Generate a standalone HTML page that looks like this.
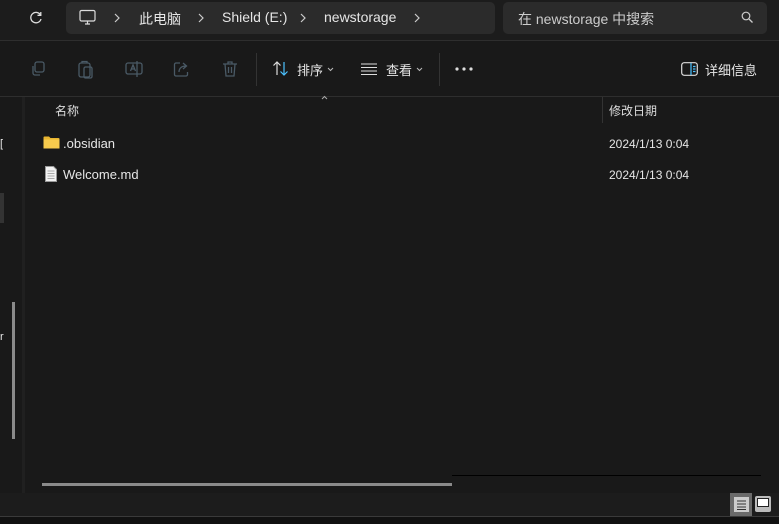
<!DOCTYPE html>
<html><head><meta charset="utf-8"><style>
*{margin:0;padding:0;box-sizing:border-box}
body{width:779px;height:524px;background:#191919;font-family:"Liberation Sans","Noto Sans CJK SC",sans-serif;color:#e6e6e6;position:relative;overflow:hidden;font-size:13px}
.a{position:absolute}
.ic{stroke:#4a5a66;fill:none;stroke-width:1.3}
</style></head><body>
<div class="a" style="left:0;top:0;width:779px;height:41px;background:#1c1c1c;border-bottom:1px solid #2e2e2e"></div>
<svg class="a" style="left:28px;top:10px" width="16" height="16" viewBox="0 0 16 16"><path d="M12.5 5 A5.2 5.2 0 1 0 13 9" stroke="#ddd" stroke-width="1.3" fill="none"/><path d="M12.8 2v3.3h-3.3" stroke="#ddd" stroke-width="1.3" fill="none"/></svg>
<div class="a" style="left:66px;top:2px;width:429px;height:32px;background:#2b2b2b;border-radius:5px"></div>
<svg class="a" style="left:79px;top:9px" width="17" height="17" viewBox="0 0 17 17"><rect x="1" y="1.5" width="15" height="10.5" rx="1.5" stroke="#ddd" stroke-width="1.2" fill="none"/><path d="M6 15h5M8.5 12v3" stroke="#ddd" stroke-width="1.2"/></svg>
<svg class="a" style="left:114px;top:13px" width="6" height="10"><path d="M1 1l4 4-4 4" stroke="#ccc" stroke-width="1.2" fill="none"/></svg>
<div class="a" style="left:139px;top:9px;font-size:14px">此电脑</div>
<svg class="a" style="left:198px;top:13px" width="6" height="10"><path d="M1 1l4 4-4 4" stroke="#ccc" stroke-width="1.2" fill="none"/></svg>
<div class="a" style="left:222px;top:9px;font-size:14px">Shield (E:)</div>
<svg class="a" style="left:300px;top:13px" width="6" height="10"><path d="M1 1l4 4-4 4" stroke="#ccc" stroke-width="1.2" fill="none"/></svg>
<div class="a" style="left:324px;top:9px;font-size:14px">newstorage</div>
<svg class="a" style="left:414px;top:13px" width="6" height="10"><path d="M1 1l4 4-4 4" stroke="#ccc" stroke-width="1.2" fill="none"/></svg>
<div class="a" style="left:503px;top:2px;width:264px;height:32px;background:#2b2b2b;border-radius:5px"></div>
<div class="a" style="left:518px;top:9px;font-size:14px;color:#ccc">在 newstorage 中搜索</div>
<svg class="a" style="left:741px;top:11px" width="13" height="13" viewBox="0 0 13 13"><circle cx="5" cy="5" r="3.8" stroke="#ccc" stroke-width="1.2" fill="none"/><path d="M8 8l3.5 3.5" stroke="#ccc" stroke-width="1.3"/></svg>
<!-- toolbar -->
<svg class="a" style="left:30px;top:60px" width="18" height="18" viewBox="0 0 18 18"><rect x="5" y="2" width="9" height="10" rx="2" class="ic" stroke="#3a5a70"/><path d="M3 6v7a2 2 0 0 0 2 2h5" class="ic"/></svg>
<svg class="a" style="left:78px;top:60px" width="18" height="20" viewBox="0 0 18 20"><rect x="1" y="3" width="11" height="14" rx="2" class="ic"/><rect x="6" y="7" width="8" height="11" rx="1.5" class="ic" stroke="#3a5a70"/><path d="M4 3V1.5h5V3" class="ic"/></svg>
<svg class="a" style="left:125px;top:60px" width="18" height="18" viewBox="0 0 18 18"><rect x="1" y="3" width="16" height="11" rx="2" class="ic"/><path d="M5.5 11l2.5-6 2.5 6M6.5 9h3" class="ic" stroke="#3a5a70"/><path d="M12 1v16" class="ic" stroke="#3a5a70"/></svg>
<svg class="a" style="left:173px;top:60px" width="18" height="18" viewBox="0 0 18 18"><path d="M7 3H3a1.5 1.5 0 0 0-1.5 1.5v10A1.5 1.5 0 0 0 3 16h10a1.5 1.5 0 0 0 1.5-1.5V12" class="ic"/><path d="M6 12c0-4 3-6 7-6M10 3l3.5 3L10 9" class="ic" stroke="#3a5a70"/></svg>
<svg class="a" style="left:221px;top:60px" width="18" height="18" viewBox="0 0 18 18"><path d="M2 4h14M7 4V2h4v2M4 4l1 12h8l1-12M7.5 7v6M10.5 7v6" class="ic"/></svg>
<div class="a" style="left:256px;top:53px;width:1px;height:33px;background:#333"></div>
<svg class="a" style="left:272px;top:60px" width="18" height="18" viewBox="0 0 18 18"><path d="M5 15V2M1.5 5.5L5 2l3.5 3.5" stroke="#ddd" stroke-width="1.2" fill="none"/><path d="M12 2v13M8.5 11.5L12 15l3.5-3.5" stroke="#4cc2ff" stroke-width="1.2" fill="none"/></svg>
<div class="a" style="left:297px;top:60px;font-size:13px">排序</div>
<svg class="a" style="left:327px;top:67px" width="7" height="5"><path d="M1 1l2.5 2.5L6 1" stroke="#bbb" stroke-width="1" fill="none"/></svg>
<svg class="a" style="left:361px;top:63px" width="16" height="12" viewBox="0 0 16 12"><path d="M0 1h16M0 4.5h16M0 8h16M0 11.5h16" stroke="#ddd" stroke-width="1"/></svg>
<div class="a" style="left:386px;top:60px">查看</div>
<svg class="a" style="left:416px;top:67px" width="7" height="5"><path d="M1 1l2.5 2.5L6 1" stroke="#bbb" stroke-width="1" fill="none"/></svg>
<div class="a" style="left:439px;top:53px;width:1px;height:33px;background:#333"></div>
<svg class="a" style="left:455px;top:67px" width="18" height="4"><circle cx="2" cy="2" r="1.6" fill="#ddd"/><circle cx="9" cy="2" r="1.6" fill="#ddd"/><circle cx="16" cy="2" r="1.6" fill="#ddd"/></svg>
<svg class="a" style="left:681px;top:62px" width="17" height="14" viewBox="0 0 17 14"><rect x="0.7" y="0.7" width="15.6" height="12.6" rx="2.5" stroke="#ddd" stroke-width="1.2" fill="none"/><path d="M10 1v12M12 4.5h2.5M12 7h2.5M12 9.5h2.5" stroke="#4cc2ff" stroke-width="1.2"/></svg>
<div class="a" style="left:705px;top:60px">详细信息</div>
<div class="a" style="left:0;top:96px;width:779px;height:1px;background:#2e2e2e"></div>
<!-- nav pane -->
<div class="a" style="left:22px;top:97px;width:3px;height:396px;background:#202020"></div>
<div class="a" style="left:0;top:193px;width:4px;height:30px;background:#333"></div>
<div class="a" style="left:0;top:138px;font-size:11px">[</div>
<div class="a" style="left:0;top:331px;font-size:11px">r</div>
<div class="a" style="left:12px;top:302px;width:3px;height:137px;background:#8a8a8a"></div>
<!-- headers -->
<div class="a" style="left:55px;top:102px;font-size:12px;color:#ddd">名称</div>
<svg class="a" style="left:321px;top:95px" width="7" height="5"><path d="M1 4l2.5-2.5L6 4" stroke="#aaa" stroke-width="1" fill="none"/></svg>
<div class="a" style="left:602px;top:97px;width:1px;height:26px;background:#333"></div>
<div class="a" style="left:609px;top:102px;font-size:12px;color:#ddd">修改日期</div>
<svg class="a" style="left:43px;top:136px" width="17" height="13" viewBox="0 0 17 13"><path d="M0.5 1.5a1 1 0 0 1 1-1h4.5l1.5 1.5h8a1 1 0 0 1 1 1V12H0.5z" fill="#e8b530"/><rect x="0.5" y="3.5" width="16" height="9" fill="#f7cb4d"/></svg>
<div class="a" style="left:63px;top:136px">.obsidian</div>
<div class="a" style="left:609px;top:137px;font-size:12px">2024/1/13 0:04</div>
<svg class="a" style="left:45px;top:166px" width="12" height="16" viewBox="0 0 12 16"><path d="M0.5 0.5h8l3 3v12h-11z" fill="#f2f2f2" stroke="#999"/><path d="M2.5 5h7M2.5 7.5h7M2.5 10h7M2.5 12.5h7" stroke="#aaa"/></svg>
<div class="a" style="left:63px;top:167px">Welcome.md</div>
<div class="a" style="left:609px;top:168px;font-size:12px">2024/1/13 0:04</div>
<!-- scrollbar -->
<div class="a" style="left:452px;top:475px;width:309px;height:1px;background:#000"></div>
<div class="a" style="left:42px;top:483px;width:410px;height:3px;background:#8a8a8a"></div>
<!-- status bar -->
<div class="a" style="left:0;top:493px;width:779px;height:23px;background:#1c1c1c"></div>
<div class="a" style="left:0;top:516px;width:779px;height:8px;background:#111;border-top:1px solid #3a3a3a"></div>
<div class="a" style="left:730px;top:493px;width:22px;height:23px;background:#6a6a6a"></div>
<div class="a" style="left:734px;top:497px;width:15px;height:15px;background:#ccc"></div>
<svg class="a" style="left:734px;top:497px" width="15" height="15"><path d="M3 4h9M3 7h9M3 10h9M3 12.5h9" stroke="#333"/></svg>
<div class="a" style="left:755px;top:496px;width:16px;height:16px;background:#bbb;border-radius:2px"></div>
<div class="a" style="left:757px;top:498px;width:12px;height:9px;background:#fff;border:1px solid #222"></div>
</body></html>
